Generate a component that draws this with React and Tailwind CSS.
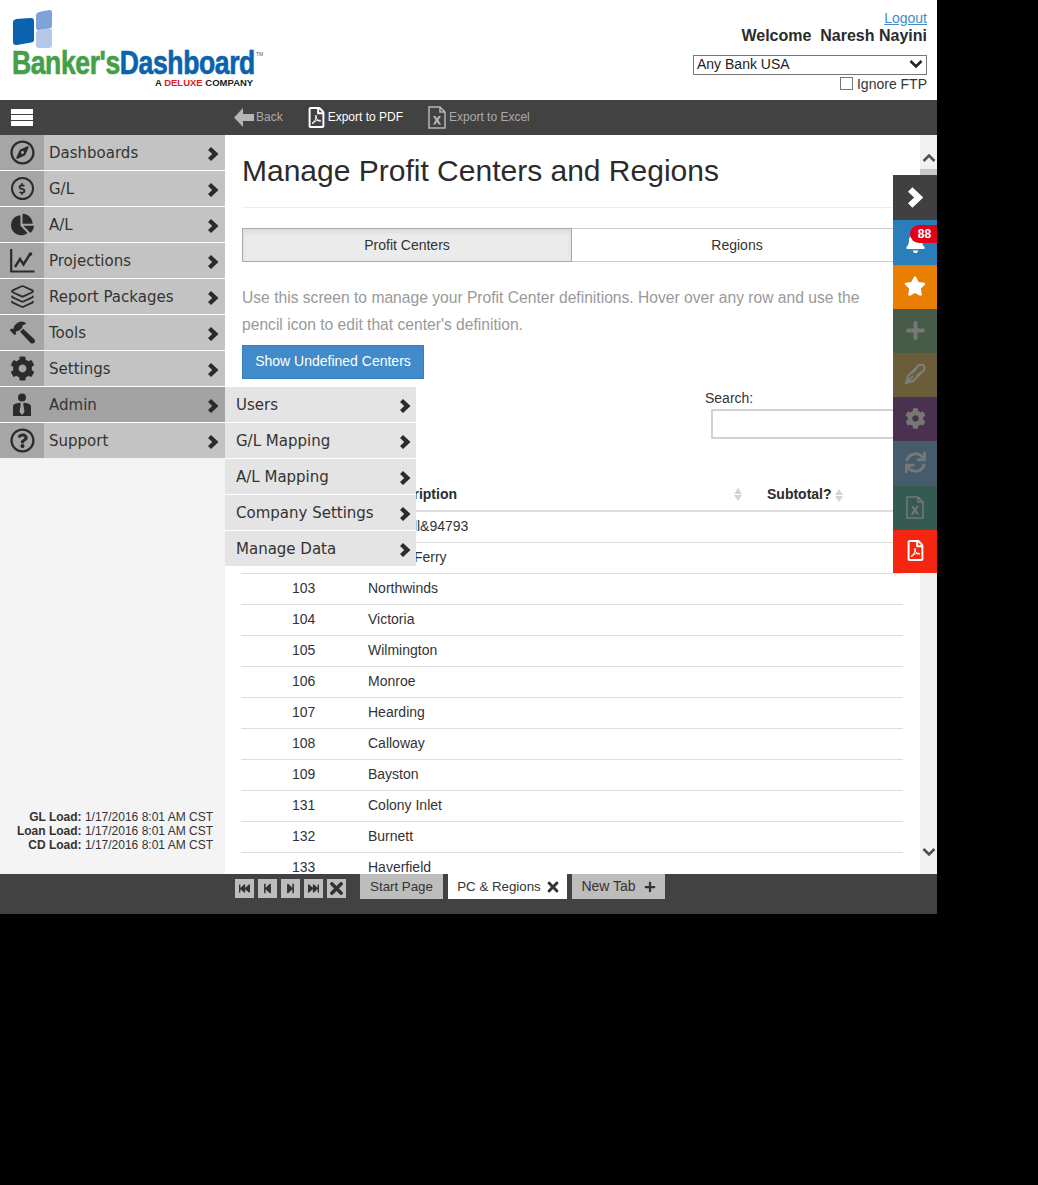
import React from "react";
import {
  FaRegCompass,
  FaChartPie,
  FaHammer,
  FaCog,
  FaRegQuestionCircle,
  FaRegFilePdf,
  FaBell,
  FaStar,
  FaPlus,
  FaSync,
  FaStepBackward,
  FaStepForward,
  FaFastBackward,
  FaFastForward,
  FaTimes,
  FaDollarSign,
} from "react-icons/fa";
import { Layers } from "lucide-react";

// Thick chevron used all over the nav
const Chevron = ({ className = "", w = 11, h = 14 }) => (
  <svg width={w} height={h} viewBox="0 0 11 14" className={className} fill="currentColor">
    <path d="M0 3 L3 0 L10.5 7 L3 14 L0 11 L4.2 7 Z" />
  </svg>
);

const BlockArrow = ({ dir = "up" }) => (
  <svg width="14" height="9" viewBox="0 0 14 9" fill="none" stroke="currentColor" strokeWidth="2.6">
    <path d={dir === "up" ? "M1.5 8 L7 2.5 L12.5 8" : "M1.5 1 L7 6.5 L12.5 1"} />
  </svg>
);

const DollarCircle = () => (
  <span className="flex h-[23px] w-[23px] items-center justify-center rounded-full border-[2.5px] border-[#2b2b2b]">
    <FaDollarSign className="text-[12px]" />
  </span>
);

const ChartIcon = () => (
  <svg width="25" height="25" viewBox="0 0 25 25" fill="none" stroke="currentColor">
    <path d="M1.2 1 V23.5 H24.5" strokeWidth="2.2" />
    <path d="M5 19 L10 11 L13.5 16.5 L20 6" strokeWidth="2.4" />
    <circle cx="20.5" cy="6" r="1.8" fill="currentColor" stroke="none" />
  </svg>
);

const AdminIcon = () => (
  <svg width="20" height="24" viewBox="0 0 20 24" fill="currentColor">
    <circle cx="10" cy="4.5" r="4" />
    <path d="M1 23 V14 Q1 11 4 10.5 L8 9.8 L8.8 11 L7.5 19 L10 22 L12.5 19 L11.2 11 L12 9.8 L16 10.5 Q19 11 19 14 V23 Z" />
  </svg>
);

const PencilIcon = ({ className = "" }) => (
  <svg width="22" height="22" viewBox="0 0 22 22" className={className} fill="none" stroke="currentColor" strokeWidth="2">
    <path d="M2 20 L4 13 L15 2 Q19 1 20 3 Q21 5 20 7 L9 18 Z" />
    <path d="M2 20 L9 13 M8 10 L13 5 M12 14 L17 9" />
  </svg>
);

const ExcelIcon = ({ className = "", w = 18, h = 23 }) => (
  <svg width={w} height={h} viewBox="0 0 18 23" className={className} fill="none" stroke="currentColor">
    <path d="M1 1 H12 L17 6 V22 H1 Z M12 1 V6 H17" strokeWidth="1.5" />
    <path d="M5 10 H7.5 L9 12.5 L10.5 10 H13 L10.4 14 L13 18.5 H10.5 L9 15.8 L7.5 18.5 H5 L7.6 14 Z" fill="currentColor" stroke="none" />
  </svg>
);

const BackArrow = () => (
  <svg width="20" height="19" viewBox="0 0 20 19" fill="#b5b5b5">
    <path d="M0 9.5 L9 0 V6 H20 V13 H9 V19 Z" />
  </svg>
);

const menu = [
  { label: "Dashboards", icon: <FaRegCompass className="text-[25px]" /> },
  { label: "G/L", icon: <DollarCircle /> },
  { label: "A/L", icon: <FaChartPie className="text-[23px]" /> },
  { label: "Projections", icon: <ChartIcon /> },
  { label: "Report Packages", icon: <Layers size={25} strokeWidth={1.8} /> },
  { label: "Tools", icon: <FaHammer className="-scale-x-100 text-[25px]" /> },
  { label: "Settings", icon: <FaCog className="text-[25px]" /> },
  { label: "Admin", icon: <AdminIcon />, active: true },
  { label: "Support", icon: <FaRegQuestionCircle className="text-[25px]" /> },
];

const subMenu = ["Users", "G/L Mapping", "A/L Mapping", "Company Settings", "Manage Data"];

const rows = [
  ["101", "Bow Mill&94793"],
  ["102", "Mason Ferry"],
  ["103", "Northwinds"],
  ["104", "Victoria"],
  ["105", "Wilmington"],
  ["106", "Monroe"],
  ["107", "Hearding"],
  ["108", "Calloway"],
  ["109", "Bayston"],
  ["131", "Colony Inlet"],
  ["132", "Burnett"],
  ["133", "Haverfield"],
];

const SortArrows = () => (
  <span className="inline-flex flex-col gap-[1px] align-middle">
    <span className="h-0 w-0 border-x-[4px] border-b-[6px] border-x-transparent border-b-[#d4d4d4]" />
    <span className="h-0 w-0 border-x-[4px] border-t-[6px] border-x-transparent border-t-[#d4d4d4]" />
  </span>
);

const Logo = () => (
  <div className="relative h-[90px] w-[265px]">
    <svg width="44" height="42" viewBox="0 0 44 42" className="ml-[12px] mt-[9px] block">
      <path d="M1 13 Q1 11 4 10 L18 9 Q22 8.5 22 12 V31 Q22 33 19 33.5 L5 36 Q1 36.5 1 33 Z" fill="#0b62ae" />
      <path d="M24 6 Q24 4 27 3 L37 1 Q40 0.5 40 3 V17 Q40 19 38 19.5 L27 21 Q24 21.5 24 19 Z" fill="#7ea3d8" />
      <path d="M24 23 Q24 21.5 27 21 L37 19.5 Q40 19 40 22 V36 Q40 39 37 39 H27 Q24 39 24 36 Z" fill="#b5c8e8" />
    </svg>
    <div className="absolute left-[12px] top-[48px] flex origin-left scale-x-[0.78] whitespace-nowrap text-[34px] font-bold leading-[28px] tracking-[-0.5px] [-webkit-text-stroke:0.7px]">
      <span className="text-[#43a047]">Banker's</span>
      <span className="text-[#0b62ae]">Dashboard</span>
    </div>
    <span className="absolute left-[256px] top-[51px] text-[5px] leading-[6px] text-[#555]">TM</span>
    <div className="absolute left-[155px] top-[77px] whitespace-nowrap text-[9.5px] font-bold leading-[11px] text-[#222]">
      A <span className="font-black text-[#e01b24]">DELUXE</span> COMPANY
    </div>
  </div>
);

const rail = [
  { bg: "bg-[#404040]", h: "h-[45px]", icon: <Chevron w={16} h={21} className="ml-[2px] text-white" /> },
  {
    bg: "bg-[#2a7fba]",
    h: "h-[45px]",
    icon: <FaBell className="text-[21px] text-white" />,
    badge: "88",
  },
  { bg: "bg-[#e97f02]", h: "h-[44px]", icon: <FaStar className="mb-[2px] text-[22px] text-white" /> },
  { bg: "bg-[#465c46]", h: "h-[44px]", icon: <FaPlus className="mb-[2px] text-[21px] text-[#777]" /> },
  { bg: "bg-[#6b5d3a]", h: "h-[44px]", icon: <PencilIcon className="mb-[2px] text-[#7f7f7f]" /> },
  { bg: "bg-[#4a3150]", h: "h-[44px]", icon: <FaCog className="mb-[2px] text-[21px] text-[#777]" /> },
  { bg: "bg-[#465c6c]", h: "h-[45px]", icon: <FaSync className="mb-[2px] text-[21px] text-[#777]" /> },
  { bg: "bg-[#345b52]", h: "h-[44px]", icon: <ExcelIcon className="mb-[2px] text-[#777]" /> },
  { bg: "bg-[#f5260f]", h: "h-[43px]", icon: <FaRegFilePdf className="mb-[2px] text-[21px] text-white" /> },
];

export default function App() {
  return (
    <div className="h-[1185px] w-[1038px] bg-black font-['Liberation_Sans',Arial,sans-serif] text-[#222]">
      <div className="relative flex h-[914px] w-[937px] flex-col overflow-hidden bg-white">
        {/* Header */}
        <header className="flex h-[100px] justify-between pr-[10px]">
          <Logo />
          <div className="flex flex-col items-end pt-[10px]">
            <a className="text-[14px] leading-[17px] text-[#428bca] underline">Logout</a>
            <div className="text-[16px] font-bold leading-[18px] text-[#2b2b2b]">
              Welcome&nbsp; Naresh Nayini
            </div>
            <div className="mt-[10px] flex h-[20px] w-[234px] items-center justify-between border border-[#767676] pb-[1px] pl-[3px] pr-[3px] text-[14px]">
              <span>Any Bank USA</span>
              <BlockArrow dir="down" />
            </div>
            <label className="flex items-center gap-[4px] text-[14px] leading-[18px] text-[#333]">
              <span className="mb-[2px] h-[13px] w-[13px] border border-[#767676]" />
              Ignore FTP
            </label>
          </div>
        </header>

        {/* Toolbar */}
        <div className="flex h-[35px] items-center bg-[#424242]">
          <div className="flex w-[225px] pl-[11px]">
            <div className="flex h-[17px] w-[22px] flex-col justify-between">
              <span className="h-[5px] bg-white" />
              <span className="h-[5px] bg-white" />
              <span className="h-[5px] bg-white" />
            </div>
          </div>
          <div className="flex items-center text-[12px] text-[#aaa]">
            <span className="ml-[9px] flex items-center gap-[2px]">
              <BackArrow />
              <span className="mb-[2px]">Back</span>
            </span>
            <span className="ml-[23px] flex items-center gap-[1px] text-white">
              <FaRegFilePdf className="text-[21px]" />
              <span className="mb-[2px]">Export to PDF</span>
            </span>
            <span className="ml-[25px] flex items-center gap-[3px]">
              <ExcelIcon className="text-[#b5b5b5]" />
              <span className="mb-[2px]">Export to Excel</span>
            </span>
          </div>
        </div>

        {/* Body */}
        <div className="flex h-[739px]">
          <aside className="flex w-[225px] shrink-0 flex-col bg-[#f4f4f4]">
            <nav className="flex flex-col gap-[1px] bg-white font-['DejaVu_Sans',Verdana,sans-serif] text-[15px] text-[#333]">
              {menu.map((m) => (
                <div key={m.label} className={`flex h-[35px] items-center ${m.active ? "bg-[#a3a3a3]" : "bg-[#c3c3c3]"}`}>
                  <span className={`flex h-full w-[44px] items-center justify-center text-[#2b2b2b] ${m.active ? "" : "bg-[#a6a6a6]"}`}>
                    {m.icon}
                  </span>
                  <span className="ml-[5px] flex-1 pt-[2px]">{m.label}</span>
                  <Chevron className="mr-[6px] mt-[3px] text-[#2b2b2b]" />
                </div>
              ))}
            </nav>
            <div className="mt-auto pb-[22px] pr-[12px] text-right text-[12px] leading-[14px] text-[#333]">
              <div><b>GL Load:</b> 1/17/2016 8:01 AM CST</div>
              <div><b>Loan Load:</b> 1/17/2016 8:01 AM CST</div>
              <div><b>CD Load:</b> 1/17/2016 8:01 AM CST</div>
            </div>
          </aside>

          <main className="h-full w-[695px] overflow-hidden pl-[17px] pr-[17px]">
            <h1 className="mt-[18px] text-[30px] font-normal leading-[36px] text-[#2b2b2b]">
              Manage Profit Centers and Regions
            </h1>
            <div className="mt-[18px] border-t border-[#eee]" />
            <div className="mt-[20px] flex h-[34px] w-[661px] text-[14px] text-[#333]">
              <div className="flex w-[330px] items-center justify-center border border-[#aaa] bg-[#ebebeb] shadow-[inset_0_3px_5px_rgba(0,0,0,0.08)]">
                Profit Centers
              </div>
              <div className="flex flex-1 items-center justify-center border-y border-r border-[#ccc]">Regions</div>
            </div>
            <p className="mt-[22px] w-[640px] text-[15.63px] leading-[27px] text-[#999]">
              Use this screen to manage your Profit Center definitions. Hover over any row and use the pencil icon to edit that center's definition.
            </p>
            <button className="mt-[7px] block h-[34px] w-[182px] border border-[#357ebd] bg-[#428bca] pb-[2px] text-[14px] text-white">
              Show Undefined Centers
            </button>
            <div className="ml-[463px] mt-[11px] text-[14px] leading-[16px] text-[#333]">Search:</div>
            <div className="ml-[469px] mt-[3px] h-[30px] w-[220px] border-2 border-[#d2d2d2]" />

            <table className="ml-[-1px] mt-[38px] w-[662px] table-fixed border-collapse text-[14px]">
              <colgroup>
                <col className="w-[127px]" />
                <col className="w-[386px]" />
                <col />
              </colgroup>
              <thead>
                <tr className="h-[34px] border-b-2 border-[#ddd] font-bold text-[#2b2b2b]">
                  <th />
                  <th className="pl-[12px] pr-[12px] pt-[2px] text-left">
                    <span className="flex items-center justify-between">
                      Description
                      <SortArrows />
                    </span>
                  </th>
                  <th className="pl-[13px] pt-[2px] text-left">
                    Subtotal? <SortArrows />
                  </th>
                </tr>
              </thead>
              <tbody className="text-[#333]">
                {rows.map(([id, name]) => (
                  <tr key={id} className="h-[31px] border-b border-[#ddd]">
                    <td className="pl-[51px]">{id}</td>
                    <td>{name}</td>
                    <td />
                  </tr>
                ))}
              </tbody>
            </table>
          </main>

          {/* Scrollbar */}
          <div className="flex w-[17px] flex-col items-center bg-[#f1f1f1] pb-[17px] pt-[18px] text-[#505050]">
            <BlockArrow dir="up" />
            <div className="mt-[7px] h-[300px] w-full bg-[#c8c8c8]" />
            <span className="mt-auto">
              <BlockArrow dir="down" />
            </span>
          </div>
        </div>

        {/* Bottom tabs */}
        <footer className="flex h-[40px] items-start bg-[#424242] pl-[235px] text-[14px]">
          <div className="mt-[5px] flex gap-[4px]">
            {[
              <FaFastBackward key="a" />,
              <FaStepBackward key="b" />,
              <FaStepForward key="c" />,
              <FaFastForward key="d" />,
            ].map((ic) => (
              <span key={ic.key} className="flex h-[19px] w-[19px] items-center justify-center bg-[#bdbdbd] text-[11px] text-[#333]">
                {ic}
              </span>
            ))}
            <span className="flex h-[19px] w-[19px] items-center justify-center bg-[#bdbdbd] text-[19px] text-[#333]">
              <FaTimes />
            </span>
          </div>
          <div className="ml-[14px] flex h-[25px] w-[83px] items-center justify-center bg-[#bdbdbd] text-[13.3px] text-[#333]">Start Page</div>
          <div className="ml-[5px] flex h-[25px] w-[119px] items-center justify-center gap-[4px] bg-white pl-[3px] text-[13.3px] text-[#333]">
            PC &amp; Regions <FaTimes className="text-[16px]" />
          </div>
          <div className="ml-[5px] flex h-[25px] w-[93px] items-center justify-center gap-[8px] bg-[#bdbdbd] text-[#333]">
            New Tab <FaPlus className="text-[12px]" />
          </div>
        </footer>

        {/* Admin flyout */}
        <div className="absolute left-[225px] top-[387px] flex w-[191px] flex-col gap-[1px] bg-white font-['DejaVu_Sans',Verdana,sans-serif] text-[15px] text-[#333]">
          {subMenu.map((s) => (
            <div key={s} className="flex h-[35px] items-center justify-between bg-[#e4e4e4] pl-[11px] pr-[5px]">
              <span className="pt-[2px]">{s}</span>
              <Chevron className="mt-[3px] text-[#2b2b2b]" />
            </div>
          ))}
        </div>

        {/* Right rail */}
        <div className="absolute left-[893px] top-[175px] flex w-[44px] flex-col">
          {rail.map((r, i) => (
            <div key={i} className={`relative flex items-center justify-center ${r.h} ${r.bg}`}>
              {r.icon}
              {r.badge && (
                <span className="absolute right-0 top-[5px] h-[18px] w-[27px] rounded-l-[9px] bg-[#e2001a] pl-[2px] text-center text-[12px] font-bold leading-[18px] text-white">
                  {r.badge}
                </span>
              )}
            </div>
          ))}
        </div>
      </div>
    </div>
  );
}
